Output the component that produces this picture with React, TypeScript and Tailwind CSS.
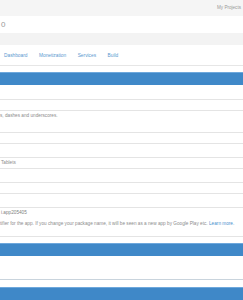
const rows = [
  { h: 'h-[15px]', text: '' },
  { h: 'h-[11px]', text: '' },
  { h: 'h-[22px]', text: 's, dashes and underscores.' },
  { h: 'h-[11px]', text: '' },
  { h: 'h-[14px]', text: '' },
  { h: 'h-[11px]', text: 'Tablets' },
  { h: 'h-[14px]', text: '' },
  { h: 'h-[11px]', text: '' },
  { h: 'h-[14px]', text: '' },
];

function BlueBar() {
  return <div className="h-[13px] bg-[#3f88c8] border-t border-[#6ea8dc]" />;
}

export default function App() {
  return (
    <div className="w-[243px] h-[300px] overflow-hidden bg-white font-['Liberation_Sans',sans-serif] text-[#8c8c8c]">
      {/* Top bar */}
      <div className="h-[16px] bg-[#f5f5f5] flex items-center justify-end pr-[2px]">
        <span className="text-[4.6px] text-[#999] leading-none">My Projects</span>
      </div>

      {/* Title */}
      <div className="h-[17px] flex items-center pl-[1px]">
        <span className="text-[8px] text-[#999] leading-none">0</span>
      </div>

      <div className="h-[12px] bg-[#f3f3f3]" />

      {/* Tabs */}
      <div className="h-[21px] border-b border-[#e6e6e6] flex items-end pb-[6px] pl-[4px] gap-[11.5px] text-[4.8px] text-[#5a98cf] leading-none">
        <span>Dashboard</span>
        <span>Monetization</span>
        <span>Services</span>
        <span>Build</span>
      </div>

      <div className="h-[6px]" />
      <BlueBar />

      {/* Form rows */}
      {rows.map((r, i) => (
        <div key={i} className={`${r.h} border-b border-[#e4e4e4] text-[4.7px] leading-none`}>
          {r.text && (
            <div className={i === 2 ? 'pt-[3px]' : 'pt-[3px] pl-[1px]'}>{r.text}</div>
          )}
        </div>
      ))}

      <div className="h-[29px] border-b border-[#e4e4e4] text-[4.7px] leading-none">
        <div className="pt-[3px] pl-[1px] text-[#808080]">i.app205405</div>
        <div className="pt-[6px] whitespace-nowrap">
          tifier for the app. If you change your package name, it will be seen as a new app by Google Play etc.{' '}
          <span className="text-[#4a90cc]">Learn more.</span>
        </div>
      </div>

      <div className="h-[6px]" />
      <BlueBar />

      <div className="h-[24px] border-b border-[#c9d4dd]" />
      <div className="h-[7px]" />
      <BlueBar />
    </div>
  );
}
